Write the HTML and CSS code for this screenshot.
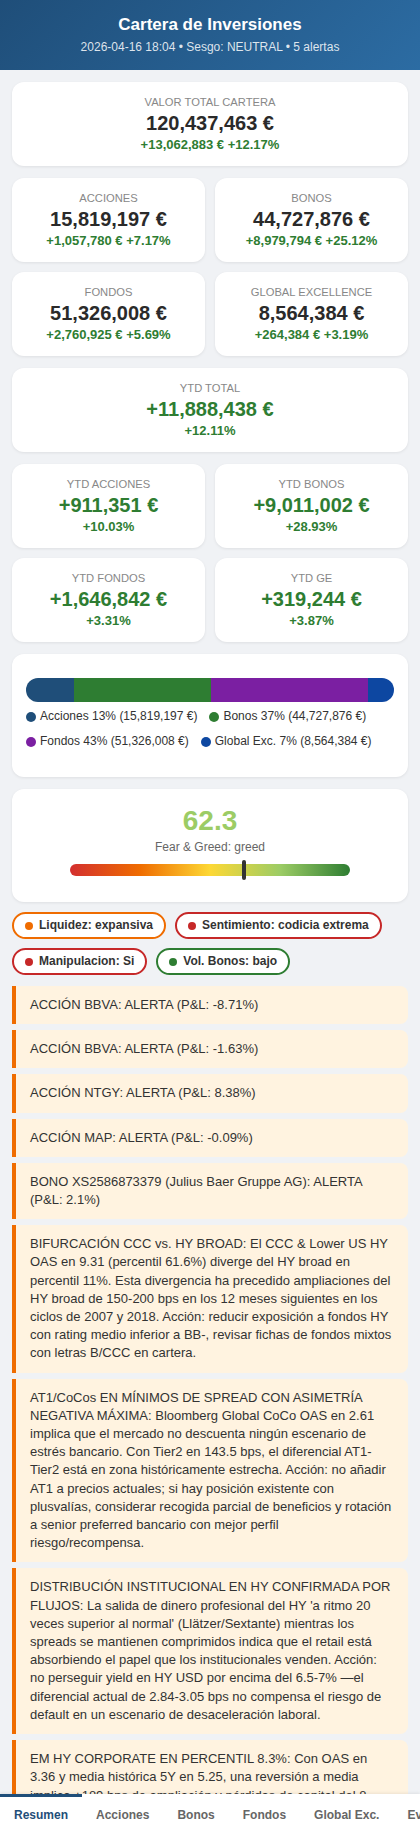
FILE: index.html
```html
<!DOCTYPE html>
<html lang="es">
<head>
<meta charset="utf-8">
<title>Cartera de Inversiones</title>
<link rel="stylesheet" href="styles.css">
</head>
<body>
<header class="header">
  <div class="title">Cartera de Inversiones</div>
  <div class="subtitle">2026-04-16 18:04 • Sesgo: NEUTRAL • 5 alertas</div>
</header>
<main class="main">
  <div class="card stat section">
    <div class="label">Valor Total Cartera</div>
    <div class="value">120,437,463 €</div>
    <div class="change">+13,062,883 € +12.17%</div>
  </div>
  <div class="grid2">
    <div class="card stat">
      <div class="label">Acciones</div>
      <div class="value">15,819,197 €</div>
      <div class="change">+1,057,780 € +7.17%</div>
    </div>
    <div class="card stat">
      <div class="label">Bonos</div>
      <div class="value">44,727,876 €</div>
      <div class="change">+8,979,794 € +25.12%</div>
    </div>
    <div class="card stat">
      <div class="label">Fondos</div>
      <div class="value">51,326,008 €</div>
      <div class="change">+2,760,925 € +5.69%</div>
    </div>
    <div class="card stat">
      <div class="label">Global Excellence</div>
      <div class="value">8,564,384 €</div>
      <div class="change">+264,384 € +3.19%</div>
    </div>
  </div>
  <div class="card stat section">
    <div class="label">YTD Total</div>
    <div class="value pos">+11,888,438 €</div>
    <div class="change">+12.11%</div>
  </div>
  <div class="grid2">
    <div class="card stat">
      <div class="label">YTD Acciones</div>
      <div class="value pos">+911,351 €</div>
      <div class="change">+10.03%</div>
    </div>
    <div class="card stat">
      <div class="label">YTD Bonos</div>
      <div class="value pos">+9,011,002 €</div>
      <div class="change">+28.93%</div>
    </div>
    <div class="card stat">
      <div class="label">YTD Fondos</div>
      <div class="value pos">+1,646,842 €</div>
      <div class="change">+3.31%</div>
    </div>
    <div class="card stat">
      <div class="label">YTD GE</div>
      <div class="value pos">+319,244 €</div>
      <div class="change">+3.87%</div>
    </div>
  </div>
  <div class="card alloc section">
    <div class="bar">
      <div class="seg c-acc" style="width:13.13%"></div>
      <div class="seg c-bon" style="width:37.14%"></div>
      <div class="seg c-fon" style="width:42.62%"></div>
      <div class="seg c-ge" style="width:7.11%"></div>
    </div>
    <div class="legend">
      <div class="legend-item"><span class="dot c-acc"></span>Acciones 13% (15,819,197 €)</div>
      <div class="legend-item"><span class="dot c-bon"></span>Bonos 37% (44,727,876 €)</div>
      <div class="legend-item"><span class="dot c-fon"></span>Fondos 43% (51,326,008 €)</div>
      <div class="legend-item"><span class="dot c-ge"></span>Global Exc. 7% (8,564,384 €)</div>
    </div>
  </div>
  <div class="card fg">
    <div class="fg-num">62.3</div>
    <div class="fg-label">Fear &amp; Greed: greed</div>
    <div class="gauge"><div class="marker" style="left:62.3%"></div></div>
  </div>
  <div class="badges">
    <span class="badge b-orange"><span class="bdot"></span>Liquidez: expansiva</span>
    <span class="badge b-red"><span class="bdot"></span>Sentimiento: codicia extrema</span>
    <span class="badge b-red"><span class="bdot"></span>Manipulacion: Si</span>
    <span class="badge b-green"><span class="bdot"></span>Vol. Bonos: bajo</span>
  </div>
  <div class="alerts">
    <div class="alert">ACCIÓN BBVA: ALERTA (P&amp;L: -8.71%)</div>
    <div class="alert">ACCIÓN BBVA: ALERTA (P&amp;L: -1.63%)</div>
    <div class="alert">ACCIÓN NTGY: ALERTA (P&amp;L: 8.38%)</div>
    <div class="alert">ACCIÓN MAP: ALERTA (P&amp;L: -0.09%)</div>
    <div class="alert">BONO XS2586873379 (Julius Baer Gruppe AG): ALERTA (P&amp;L: 2.1%)</div>
    <div class="alert">BIFURCACIÓN CCC vs. HY BROAD: El CCC &amp; Lower US HY OAS en 9.31 (percentil 61.6%) diverge del HY broad en percentil 11%. Esta divergencia ha precedido ampliaciones del HY broad de 150-200 bps en los 12 meses siguientes en los ciclos de 2007 y 2018. Acción: reducir exposición a fondos HY con rating medio inferior a BB-, revisar fichas de fondos mixtos con letras B/CCC en cartera.</div>
    <div class="alert">AT1/CoCos EN MÍNIMOS DE SPREAD CON ASIMETRÍA NEGATIVA MÁXIMA: Bloomberg Global CoCo OAS en 2.61 implica que el mercado no descuenta ningún escenario de estrés bancario. Con Tier2 en 143.5 bps, el diferencial AT1-Tier2 está en zona históricamente estrecha. Acción: no añadir AT1 a precios actuales; si hay posición existente con plusvalías, considerar recogida parcial de beneficios y rotación a senior preferred bancario con mejor perfil riesgo/recompensa.</div>
    <div class="alert">DISTRIBUCIÓN INSTITUCIONAL EN HY CONFIRMADA POR FLUJOS: La salida de dinero profesional del HY 'a ritmo 20 veces superior al normal' (Llätzer/Sextante) mientras los spreads se mantienen comprimidos indica que el retail está absorbiendo el papel que los institucionales venden. Acción: no perseguir yield en HY USD por encima del 6.5-7% —el diferencial actual de 2.84-3.05 bps no compensa el riesgo de default en un escenario de desaceleración laboral.</div>
    <div class="alert">EM HY CORPORATE EN PERCENTIL 8.3%: Con OAS en 3.36 y media histórica 5Y en 5.25, una reversión a media implica +189 bps de ampliación y pérdidas de capital del 8-10% en fondos EM HY. Acción: reducir duración y priorizar emisores con grado de inversión.</div>
  </div>
</main>
<nav class="nav">
  <span class="tab active">Resumen</span>
  <span class="tab">Acciones</span>
  <span class="tab">Bonos</span>
  <span class="tab">Fondos</span>
  <span class="tab">Global Exc.</span>
  <span class="tab">Evolución</span>
</nav>
</body>
</html>
```

FILE: styles.css
```css
* { box-sizing: border-box; }
body {
  margin: 0;
  background: #f0f2f5;
  font-family: "Liberation Sans", Arial, sans-serif;
  color: #222;
}
.header {
  height: 70px;
  padding-top: 14px;
  text-align: center;
  color: #fff;
  background: linear-gradient(135deg, #1f4e79 0%, #2c6ca3 100%);
}
.title {
  font-size: 17px;
  font-weight: 700;
  line-height: 22px;
}
.subtitle {
  margin-top: 3px;
  font-size: 12px;
  line-height: 16px;
  color: rgba(255, 255, 255, 0.85);
}
.main {
  padding: 12px 12px 60px;
}
.card {
  background: #fff;
  border-radius: 12px;
  box-shadow: 0 1px 3px rgba(0, 0, 0, 0.08);
}
.section { margin-bottom: 12px; }
.stat {
  text-align: center;
  padding: 13px 8px;
}
.grid2 {
  display: grid;
  grid-template-columns: 1fr 1fr;
  gap: 10px;
  margin-bottom: 12px;
}
.label {
  font-size: 11.2px;
  line-height: 14px;
  color: #888;
  text-transform: uppercase;
  margin-bottom: 2px;
}
.value {
  font-size: 20px;
  font-weight: 700;
  line-height: 24px;
  color: #2a2a2a;
  margin-bottom: 2px;
}
.value.pos { color: #2e7d32; }
.change {
  font-size: 13px;
  font-weight: 700;
  line-height: 16px;
  color: #2e7d32;
}
.alloc {
  padding: 24px 14px 27px;
}
.bar {
  display: flex;
  height: 24px;
  border-radius: 12px;
  overflow: hidden;
}
.seg { height: 100%; }
.c-acc { background: #1f4e79; }
.c-bon { background: #2e7d32; }
.c-fon { background: #7b1fa2; }
.c-ge { background: #0d47a1; }
.legend {
  display: flex;
  flex-wrap: wrap;
  gap: 8px 12px;
  margin-top: 6px;
  font-size: 12px;
  color: #333;
}
.legend-item {
  display: flex;
  align-items: center;
  gap: 4px;
  line-height: 17px;
}
.dot {
  width: 10px;
  height: 10px;
  border-radius: 50%;
  flex: none;
}
.fg {
  text-align: center;
  padding: 16px 14px;
  margin-bottom: 10px;
}
.fg-num {
  font-size: 28px;
  font-weight: 700;
  line-height: 32px;
  color: #9ccc65;
}
.fg-label {
  margin-top: 2px;
  font-size: 12px;
  line-height: 16px;
  color: #666;
}
.gauge {
  position: relative;
  width: 280px;
  height: 12px;
  margin: 9px auto 10px;
  border-radius: 6px;
  background: linear-gradient(90deg, #d32f2f 0%, #ef6c00 25%, #fdd835 50%, #9ccc65 75%, #2e7d32 100%);
}
.marker {
  position: absolute;
  top: -4px;
  width: 4px;
  height: 20px;
  margin-left: -2px;
  background: #333;
  border-radius: 2px;
}
.badges {
  display: flex;
  flex-wrap: wrap;
  gap: 9px;
  margin-bottom: 11px;
}
.badge {
  display: inline-flex;
  align-items: center;
  gap: 6px;
  padding: 4px 11px;
  border: 2px solid;
  border-radius: 14px;
  background: #fff;
  font-size: 12px;
  font-weight: 700;
  line-height: 15px;
  color: #333;
}
.bdot {
  width: 8px;
  height: 8px;
  border-radius: 50%;
  flex: none;
}
.b-orange { border-color: #ef6c00; }
.b-orange .bdot { background: #ef6c00; }
.b-red { border-color: #c62828; }
.b-red .bdot { background: #c62828; }
.b-green { border-color: #2e7d32; }
.b-green .bdot { background: #2e7d32; }
.alert {
  background: #fff3e0;
  border-left: 4px solid #ef6c00;
  border-radius: 0 8px 8px 0;
  padding: 10px 14px;
  font-size: 13px;
  line-height: 18.2px;
  color: #333;
  margin-bottom: 6px;
}
.nav {
  position: fixed;
  left: 0;
  right: 0;
  bottom: 0;
  height: 38px;
  display: flex;
  background: #fff;
  overflow-x: auto;
  scrollbar-width: none;
  white-space: nowrap;
  box-shadow: 0 -1px 3px rgba(0, 0, 0, 0.08);
}
.tab {
  flex: none;
  display: flex;
  align-items: center;
  padding: 0 14px;
  border-top: 3px solid transparent;
  font-size: 12px;
  font-weight: 700;
  color: #666;
}
.tab.active {
  color: #1f4e79;
  border-top-color: #1f4e79;
}
```
